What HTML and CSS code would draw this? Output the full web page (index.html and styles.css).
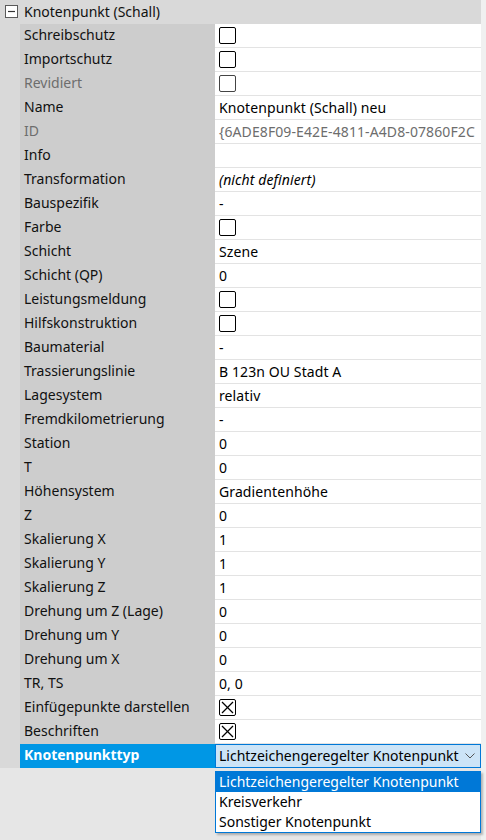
FILE: index.html
```html
<!DOCTYPE html>
<html lang="de">
<head>
<meta charset="utf-8">
<title>Eigenschaften</title>
<link rel="stylesheet" href="styles.css">
</head>
<body>
<div class="panel">
  <div class="grid">
    <div class="header">
      <span class="toggle"><svg width="13" height="13" viewBox="0 0 13 13"><rect x="0.5" y="0.5" width="12" height="12" fill="#fff" stroke="#5a5a5a"/><line x1="3" y1="6.5" x2="10" y2="6.5" stroke="#333" stroke-width="1.2"/></svg></span>
      <span class="header-text">Knotenpunkt (Schall)</span>
    </div>

    <div class="row"><div class="gut"></div><div class="lbl">Schreibschutz</div><div class="val"><span class="cb"></span></div></div>
    <div class="row"><div class="gut"></div><div class="lbl">Importschutz</div><div class="val"><span class="cb"></span></div></div>
    <div class="row"><div class="gut"></div><div class="lbl dim">Revidiert</div><div class="val"><span class="cb dimcb"></span></div></div>
    <div class="row"><div class="gut"></div><div class="lbl">Name</div><div class="val">Knotenpunkt (Schall) neu</div></div>
    <div class="row"><div class="gut"></div><div class="lbl dim">ID</div><div class="val dim">{6ADE8F09-E42E-4811-A4D8-07860F2C</div></div>
    <div class="row"><div class="gut"></div><div class="lbl">Info</div><div class="val"></div></div>
    <div class="row"><div class="gut"></div><div class="lbl">Transformation</div><div class="val ital">(nicht definiert)</div></div>
    <div class="row"><div class="gut"></div><div class="lbl">Bauspezifik</div><div class="val">-</div></div>
    <div class="row"><div class="gut"></div><div class="lbl">Farbe</div><div class="val"><span class="cb"></span></div></div>
    <div class="row"><div class="gut"></div><div class="lbl">Schicht</div><div class="val">Szene</div></div>
    <div class="row"><div class="gut"></div><div class="lbl">Schicht (QP)</div><div class="val">0</div></div>
    <div class="row"><div class="gut"></div><div class="lbl">Leistungsmeldung</div><div class="val"><span class="cb"></span></div></div>
    <div class="row"><div class="gut"></div><div class="lbl">Hilfskonstruktion</div><div class="val"><span class="cb"></span></div></div>
    <div class="row"><div class="gut"></div><div class="lbl">Baumaterial</div><div class="val">-</div></div>
    <div class="row"><div class="gut"></div><div class="lbl">Trassierungslinie</div><div class="val">B 123n OU Stadt A</div></div>
    <div class="row"><div class="gut"></div><div class="lbl">Lagesystem</div><div class="val">relativ</div></div>
    <div class="row"><div class="gut"></div><div class="lbl">Fremdkilometrierung</div><div class="val">-</div></div>
    <div class="row"><div class="gut"></div><div class="lbl">Station</div><div class="val">0</div></div>
    <div class="row"><div class="gut"></div><div class="lbl">T</div><div class="val">0</div></div>
    <div class="row"><div class="gut"></div><div class="lbl">Höhensystem</div><div class="val">Gradientenhöhe</div></div>
    <div class="row"><div class="gut"></div><div class="lbl">Z</div><div class="val">0</div></div>
    <div class="row"><div class="gut"></div><div class="lbl">Skalierung X</div><div class="val">1</div></div>
    <div class="row"><div class="gut"></div><div class="lbl">Skalierung Y</div><div class="val">1</div></div>
    <div class="row"><div class="gut"></div><div class="lbl">Skalierung Z</div><div class="val">1</div></div>
    <div class="row"><div class="gut"></div><div class="lbl">Drehung um Z (Lage)</div><div class="val">0</div></div>
    <div class="row"><div class="gut"></div><div class="lbl">Drehung um Y</div><div class="val">0</div></div>
    <div class="row"><div class="gut"></div><div class="lbl">Drehung um X</div><div class="val">0</div></div>
    <div class="row"><div class="gut"></div><div class="lbl">TR, TS</div><div class="val">0, 0</div></div>
    <div class="row"><div class="gut"></div><div class="lbl">Einfügepunkte darstellen</div><div class="val"><span class="cb checked"><svg width="17" height="17" viewBox="0 0 17 17"><line x1="3" y1="3" x2="14" y2="14" stroke="#000" stroke-width="1.3"/><line x1="14" y1="3" x2="3" y2="14" stroke="#000" stroke-width="1.3"/></svg></span></div></div>
    <div class="row"><div class="gut"></div><div class="lbl">Beschriften</div><div class="val"><span class="cb checked"><svg width="17" height="17" viewBox="0 0 17 17"><line x1="3" y1="3" x2="14" y2="14" stroke="#000" stroke-width="1.3"/><line x1="14" y1="3" x2="3" y2="14" stroke="#000" stroke-width="1.3"/></svg></span></div></div>
    <div class="row sel"><div class="gut"></div><div class="lbl">Knotenpunkttyp</div>
      <div class="val combo-cell">
        <div class="combo">
          <span class="combo-text">Lichtzeichengeregelter Knotenpunkt</span>
          <svg class="chev" width="10" height="6" viewBox="0 0 10 6"><polyline points="0.5,0.5 5,5 9.5,0.5" fill="none" stroke="#555" stroke-width="1"/></svg>
        </div>
        <div class="droplist">
          <div class="opt on">Lichtzeichengeregelter Knotenpunkt</div>
          <div class="opt">Kreisverkehr</div>
          <div class="opt">Sonstiger Knotenpunkt</div>
        </div>
      </div>
    </div>
    <div class="rest"></div>
  </div>
  <div class="strip"></div>
</div>
</body>
</html>
```

FILE: styles.css
```css
* { box-sizing: border-box; }
html, body {
  margin: 0;
  padding: 0;
  width: 486px;
  height: 840px;
  overflow: hidden;
  background: #f0f0f0;
  font-family: "Noto Sans", "Open Sans", sans-serif;
  font-size: 14px;
  color: #000;
}
.panel {
  display: flex;
  width: 486px;
  height: 840px;
}
.grid {
  width: 481px;
  display: flex;
  flex-direction: column;
}
.strip {
  flex: 1;
  background: #f0f0f0;
}
.header {
  height: 24px;
  background: #d9d9d9;
  display: flex;
  align-items: center;
  padding-left: 5px;
}
.toggle {
  width: 13px;
  height: 13px;
  display: flex;
  margin-right: 6px;
  margin-top: -1px;
}
.header-text {
  color: #111;
  margin-top: -2px;
}
.row {
  display: flex;
  height: 24px;
}
.gut {
  width: 20px;
  background: #d9d9d9;
}
.lbl {
  width: 195px;
  background: #cdcdcd;
  padding-left: 4px;
  line-height: 22px;
  color: #111;
  white-space: nowrap;
}
.val {
  width: 266px;
  background: #fff;
  border-bottom: 1px solid #e3e3e3;
  padding-left: 4px;
  line-height: 22px;
  white-space: nowrap;
  overflow: hidden;
  display: flex;
  align-items: center;
  letter-spacing: 0.1px;
}
.dim { color: #6d6d6d; }
.ital { font-style: italic; }
.cb {
  display: block;
  width: 17px;
  height: 17px;
  border: 1.5px solid #000;
  border-radius: 2px;
  position: relative;
}
.cb.dimcb { border-color: #444; }
.cb.checked svg {
  position: absolute;
  left: -1.5px;
  top: -1.5px;
}
.row.sel .lbl {
  background: #0097e5;
  color: #fff;
  font-weight: bold;
}
.combo-cell {
  padding: 0;
  border-bottom: none;
  overflow: visible;
  position: relative;
  background: transparent;
  align-items: stretch;
  letter-spacing: 0;
}
.combo {
  flex: 1;
  background: #cce4f7;
  border: 1px solid #0078d7;
  display: flex;
  align-items: center;
  padding-left: 3px;
  padding-right: 5px;
  justify-content: space-between;
}
.chev { flex: none; margin-left: 4px; }
.droplist {
  position: absolute;
  left: 0;
  top: 27px;
  width: 266px;
  background: #fff;
  border: 1px solid #0078d7;
  box-shadow: 2px 2px 2px rgba(0,0,0,0.25);
  z-index: 2;
}
.opt {
  height: 20px;
  line-height: 19px;
  padding-left: 3px;
  white-space: nowrap;
}
.opt.on {
  background: #0078d7;
  color: #fff;
}
.rest {
  flex: 1;
  background: #e6e6e6;
}
```
